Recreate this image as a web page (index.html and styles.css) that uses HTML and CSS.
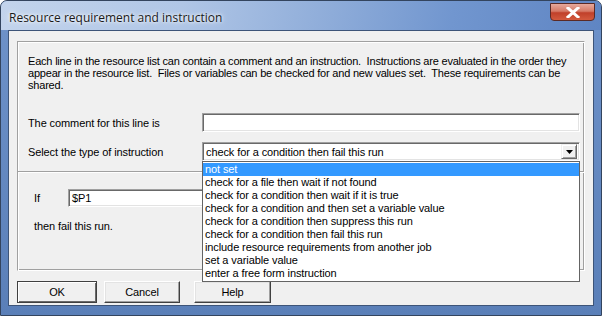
FILE: index.html
```html
<!DOCTYPE html>
<html lang="en">
  <head>
    <meta charset="UTF-8" />
    <title>Resource requirement and instruction</title>
    <link rel="stylesheet" href="styles.css">
  </head>
  <body>
    <div class="window">
      <div class="titlebar">
        <span class="title">Resource requirement and instruction</span>
        <div class="close">
          <svg width="14" height="11" viewBox="0 0 14 11">
            <path d="M2 1 L12 10 M12 1 L2 10" stroke="#ffffff" stroke-width="3" stroke-linecap="square" fill="none" />
          </svg>
        </div>
      </div>
      <div class="client">
        <div class="panel">
          <div class="section upper">
            <p class="intro">
              Each line in the resource list can contain a comment and an instruction.&nbsp; Instructions are evaluated in the order they<br>
              appear in the resource list.&nbsp; Files or variables can be checked for and new values set.&nbsp; These requirements can be<br>
              shared.
            </p>
            <div class="row">
              <span class="label">The comment for this line is</span>
              <div class="field"></div>
            </div>
            <div class="row">
              <span class="label">Select the type of instruction</span>
              <div class="field combo">
                <span class="combo-text">check for a condition then fail this run</span>
                <span class="drop-btn">
                  <svg width="7" height="4" viewBox="0 0 7 4"><path d="M0 0 H7 L3.5 4 Z" fill="#000000" /></svg>
                </span>
                <ul class="droplist">
                  <li class="selected">not set</li>
                  <li>check for a file then wait if not found</li>
                  <li>check for a condition then wait if it is true</li>
                  <li>check for a condition and then set a variable value</li>
                  <li>check for a condition then suppress this run</li>
                  <li>check for a condition then fail this run</li>
                  <li>include resource requirements from another job</li>
                  <li>set a variable value</li>
                  <li>enter a free form instruction</li>
                </ul>
              </div>
            </div>
          </div>
          <div class="section lower">
            <div class="if-row">
              <span class="label">If</span>
              <div class="field small">$P1</div>
            </div>
            <p class="then">then fail this run.</p>
          </div>
        </div>
        <div class="buttons">
          <button type="button" class="btn ok">OK</button>
          <button type="button" class="btn cancel">Cancel</button>
          <button type="button" class="btn help">Help</button>
        </div>
      </div>
    </div>
  </body>
</html>
```

FILE: styles.css
```css
body {
  margin: 0;
  width: 602px;
  height: 316px;
  overflow: hidden;
  background-color: #ffffff;
  font-family: "Liberation Sans", Arial, sans-serif;
  font-size: 11px;
  letter-spacing: -0.1px;
  color: #000000;
}

.window {
  width: 602px;
  height: 316px;
  box-sizing: border-box;
  border: 1px solid #33445e;
  border-radius: 7px 7px 0 0;
  background: linear-gradient(to bottom, #6f93ca, #5a7fb8);
  display: flex;
  flex-direction: column;
}

.titlebar {
  height: 29px;
  display: flex;
  align-items: flex-start;
  justify-content: space-between;
  border-radius: 6px 6px 0 0;
  background: linear-gradient(100deg, #c3d4ec 0%, #b0c6e6 30%, #8eacd9 55%, #7196cf 75%, #5f85c3 100%);
}

.title {
  font-family: "Open Sans", sans-serif;
  font-size: 12px;
  letter-spacing: 0;
  margin: 8px 0 0 8px;
  color: #1a1a1a;
  text-shadow: 0 0 6px #ffffff, 0 0 3px #ffffff;
}

.close {
  width: 45px;
  height: 18px;
  margin: 2px 6px 0 0;
  box-sizing: border-box;
  border: 1px solid #5b2a25;
  border-radius: 0 0 4px 4px;
  background: linear-gradient(to bottom, #e6a99c 0%, #d67a66 45%, #c0402a 55%, #d35a3e 100%);
  display: flex;
  align-items: center;
  justify-content: center;
}

.client {
  margin: 0 7px 9px 7px;
  flex: 1;
  background-color: #f0f0f0;
  border: 1px solid #3d5478;
  padding: 10px 8px 0 8px;
}

.panel {
  height: 230px;
  box-sizing: border-box;
  border: 1px solid;
  border-color: #a0a0a0 #ffffff #ffffff #a0a0a0;
  box-shadow: inset 1px 1px 0 #ffffff, inset -1px -1px 0 #a0a0a0;
  display: flex;
  flex-direction: column;
}

.section.upper {
  padding: 13px 4px 10px 10px;
}

.intro {
  margin: 0 0 22px 0;
  line-height: 12px;
  letter-spacing: -0.2px;
  white-space: nowrap;
}

.row {
  display: grid;
  grid-template-columns: 174px 378px;
  align-items: center;
  margin-bottom: 10px;
}

.row:last-child {
  margin-bottom: 0;
}

.field {
  height: 19px;
  box-sizing: border-box;
  background-color: #ffffff;
  border: 1px solid;
  border-color: #a0a0a0 #ffffff #ffffff #a0a0a0;
  box-shadow: inset 1px 1px 0 #696969, inset -1px -1px 0 #e3e3e3;
  padding: 0 3px;
  display: flex;
  align-items: center;
}

.field.small {
  height: 18px;
  width: 512px;
}

.combo {
  position: relative;
  justify-content: space-between;
  padding-right: 2px;
}

.drop-btn {
  width: 16px;
  height: 15px;
  box-sizing: border-box;
  background-color: #f0f0f0;
  border: 1px solid;
  border-color: #f0f0f0 #696969 #696969 #f0f0f0;
  box-shadow: inset 1px 1px 0 #ffffff, inset -1px -1px 0 #a0a0a0;
  display: flex;
  align-items: center;
  justify-content: center;
}

.droplist {
  position: absolute;
  top: 18px;
  left: -1px;
  width: 378px;
  box-sizing: border-box;
  margin: 0;
  padding: 1px 0;
  list-style: none;
  background-color: #ffffff;
  border: 1px solid #646464;
  z-index: 5;
}

.droplist li {
  height: 13px;
  line-height: 13px;
  padding-left: 2px;
  white-space: nowrap;
}

.droplist li.selected {
  background-color: #3399ff;
  color: #ffffff;
}

.section.lower {
  flex: 1;
  border-top: 1px solid #a0a0a0;
  box-shadow: inset 0 1px 0 #ffffff;
  padding: 17px 4px 0 16px;
}

.if-row {
  display: grid;
  grid-template-columns: 34px 512px;
  align-items: center;
}

.then {
  margin: 13px 0 0 0;
  line-height: 12px;
}

.buttons {
  display: flex;
  margin-top: 10px;
}

.btn {
  height: 22px;
  width: 76px;
  box-sizing: border-box;
  font-family: "Liberation Sans", Arial, sans-serif;
  font-size: 11px;
  letter-spacing: -0.1px;
  color: #000000;
  background-color: #f0f0f0;
  border: 1px solid;
  border-color: #ffffff #404040 #404040 #ffffff;
  box-shadow: inset -1px -1px 0 #a0a0a0, inset 1px 1px 0 #e3e3e3;
  padding: 0;
}

.btn.ok {
  width: 80px;
  border-color: #404040;
  box-shadow: inset 1px 1px 0 #ffffff, inset -1px -1px 0 #696969;
}

.btn.cancel {
  margin-left: 7px;
}

.btn.help {
  margin-left: 14px;
  width: 77px;
}
```
